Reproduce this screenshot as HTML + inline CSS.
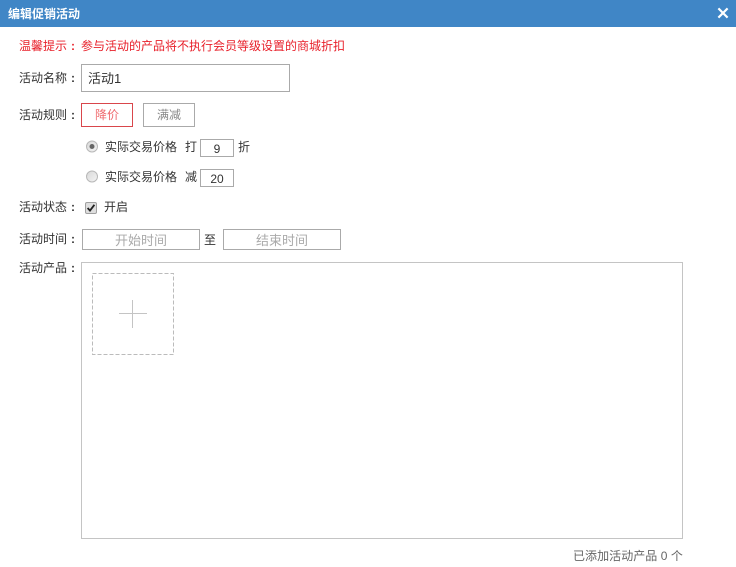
<!DOCTYPE html>
<html><head><meta charset="utf-8">
<style>
html,body{margin:0;padding:0;background:#fff;}
body{width:736px;height:567px;position:relative;overflow:hidden;font-family:"Liberation Sans","Noto Sans CJK SC",sans-serif;font-size:12px;color:#333;}
.a{position:absolute;white-space:nowrap;line-height:16px;}
.b{position:absolute;box-sizing:border-box;border:1px solid #aaa;text-align:center;}
.c{position:absolute;left:71px;font-weight:bold;line-height:16px;}
</style></head><body>
<div class="a" style="left:0;top:0;width:736px;height:27px;background:#4086c6;"></div>
<div class="a" style="left:8px;top:6px;color:#fff;font-weight:bold;font-size:12px;">编辑促销活动</div>
<svg class="a" style="left:717px;top:7px" width="12" height="12" viewBox="0 0 12 12"><path d="M1.4 1.4L10.6 10.6M10.6 1.4L1.4 10.6" stroke="#fff" stroke-width="2.2" fill="none"/></svg>

<div class="a" style="left:19px;top:38px;color:#e8212b;">温馨提示</div><div class="c" style="top:38px;color:#e8212b;">:</div>
<div class="a" style="left:81px;top:38px;color:#e8212b;">参与活动的产品将不执行会员等级设置的商城折扣</div>

<div class="a" style="left:19px;top:70px;">活动名称</div><div class="c" style="top:70px;">:</div>
<div class="b" style="left:81px;top:64px;width:209px;height:28px;line-height:27px;text-align:left;padding-left:6px;font-size:13px;">活动1</div>

<div class="a" style="left:19px;top:107px;">活动规则</div><div class="c" style="top:107px;">:</div>
<div class="b" style="left:81px;top:103px;width:52px;height:24px;line-height:22px;border-color:#d9464b;color:#ef6a6e;">降价</div>
<div class="b" style="left:143px;top:103px;width:52px;height:24px;line-height:22px;color:#888;">满减</div>

<svg class="a" style="left:86px;top:140px" width="13" height="13"><defs><linearGradient id="g" x1="0" y1="0" x2="1" y2="1"><stop offset="0" stop-color="#d8d8d8"/><stop offset="1" stop-color="#f4f4f4"/></linearGradient></defs><circle cx="6" cy="6.5" r="5.5" fill="url(#g)" stroke="#b8b8b8"/><circle cx="6" cy="6.5" r="2.5" fill="#666"/></svg>
<div class="a" style="left:105px;top:139px;">实际交易价格</div>
<div class="a" style="left:185px;top:139px;">打</div>
<div class="b" style="left:200px;top:139px;width:34px;height:18px;line-height:18px;">9</div>
<div class="a" style="left:238px;top:139px;">折</div>

<svg class="a" style="left:86px;top:170px" width="13" height="13"><circle cx="6" cy="6.5" r="5.5" fill="url(#g)" stroke="#b8b8b8"/></svg>
<div class="a" style="left:105px;top:169px;">实际交易价格</div>
<div class="a" style="left:185px;top:169px;">减</div>
<div class="b" style="left:200px;top:169px;width:34px;height:18px;line-height:18px;">20</div>

<div class="a" style="left:19px;top:199px;">活动状态</div><div class="c" style="top:199px;">:</div>
<svg class="a" style="left:85px;top:202px" width="12" height="12"><rect x="0.5" y="0.5" width="11" height="11" rx="1.5" fill="#dedede" stroke="#a0a0a0"/><path d="M2.6 6L5 8.6L9.4 2.8" stroke="#222" stroke-width="1.8" fill="none"/></svg>
<div class="a" style="left:104px;top:199px;">开启</div>

<div class="a" style="left:19px;top:231px;">活动时间</div><div class="c" style="top:231px;">:</div>
<div class="b" style="left:82px;top:229px;width:118px;height:21px;line-height:21px;color:#aaa;font-size:13px;">开始时间</div>
<div class="a" style="left:204px;top:232px;">至</div>
<div class="b" style="left:223px;top:229px;width:118px;height:21px;line-height:21px;color:#aaa;font-size:13px;">结束时间</div>

<div class="a" style="left:19px;top:260px;">活动产品</div><div class="c" style="top:260px;">:</div>
<div class="b" style="left:81px;top:262px;width:602px;height:277px;border-color:#c4c4c4;"></div>
<svg class="a" style="left:92px;top:273px" width="82" height="82"><rect x="0.5" y="0.5" width="81" height="81" fill="none" stroke="#bbb" stroke-dasharray="4 2"/></svg>
<div class="a" style="left:119px;top:313px;width:28px;height:1px;background:#c4c4c4;"></div>
<div class="a" style="left:132px;top:300px;width:1px;height:28px;background:#c4c4c4;"></div>

<div class="a" style="left:573px;top:548px;color:#666;letter-spacing:0.05px;">已添加活动产品 0 个</div>
</body></html>
